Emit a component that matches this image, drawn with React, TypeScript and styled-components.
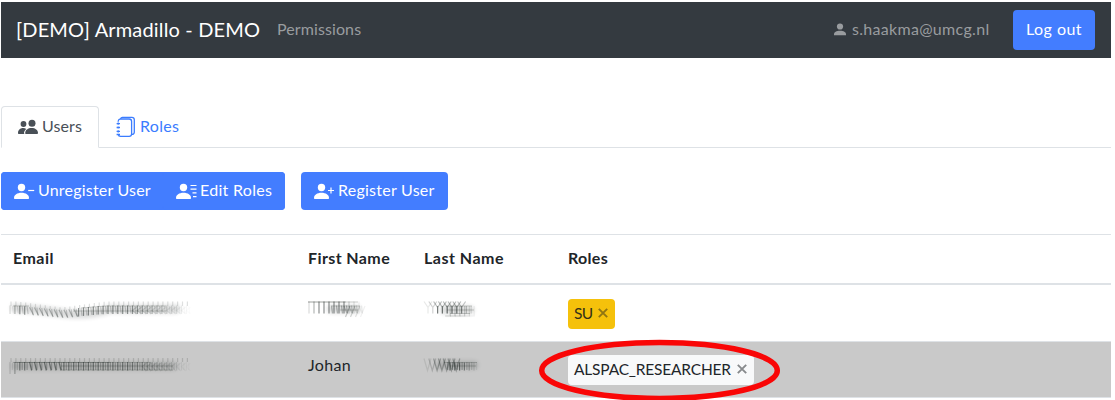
import React from "react";
import styled, { createGlobalStyle } from "styled-components";

const GlobalStyle = createGlobalStyle`
  * { box-sizing: border-box; }
  body {
    margin: 0;
    background: #fff;
    color: #212529;
    font: 400 16px/24px Lato, "Liberation Sans", sans-serif;
    overflow: hidden;
  }
`;

const Page = styled.div`
  width: 1111px;
  height: 400px;
  padding: 2px 0 0 1px;
  overflow: hidden;
`;

const Navbar = styled.nav`
  display: flex;
  align-items: center;
  height: 56px;
  padding: 0 16px 0 15px;
  background: #343a40;
`;

const Label = styled.span<{ $ls?: number; $lift?: number }>`
  margin-bottom: ${(p) => p.$lift ?? 0}px;
  letter-spacing: ${(p) => p.$ls ?? 0}px;
  white-space: nowrap;
`;

const Brand = styled.span`
  width: 261px;
  margin-bottom: 2px;
  font-size: 20px;
  color: #fff;
  white-space: nowrap;
`;

const NavLink = styled.span`
  flex: 1;
  margin-bottom: 2px;
  color: #999c9f;
`;

const Account = styled.span`
  display: flex;
  align-items: center;
  gap: 5px;
  width: 180px;
  color: #999c9f;
`;

const Button = styled.button<{ $w: number; $h?: number }>`
  display: flex;
  align-items: center;
  gap: 3px;
  width: ${(p) => p.$w}px;
  height: ${(p) => p.$h ?? 38}px;
  padding: 0 0 0 13px;
  border: 0;
  border-radius: 4px;
  background: #437dff;
  color: #fff;
  font: inherit;
`;

const Tabs = styled.div`
  display: flex;
  height: 42px;
  margin-top: 48px;
  border-bottom: 1px solid #dee2e6;
`;

const Tab = styled.div<{ $active?: boolean }>`
  display: flex;
  align-items: center;
  gap: 4px;
  height: 42px;
  width: 98px;
  padding-left: 16px;
  border: 1px solid ${(p) => (p.$active ? "#dee2e6" : "transparent")};
  border-bottom-color: ${(p) => (p.$active ? "#fff" : "transparent")};
  border-radius: 4px 4px 0 0;
  color: ${(p) => (p.$active ? "#495057" : "#3b7cff")};
`;

const Toolbar = styled.div`
  display: flex;
  gap: 16px;
  margin: 24px 0;
`;

const ButtonGroup = styled.div`
  display: flex;
  border-radius: 4px;
  background: #437dff;
`;

const Table = styled.div`
  border-top: 1px solid #dee2e6;
`;

const Row = styled.div<{ $shaded?: boolean }>`
  display: grid;
  grid-template-columns: 295px 116px 144px 1fr;
  height: ${(p) => (p.$shaded ? 56 : 57)}px;
  border-bottom: 1px solid #dee2e6;
  background: ${(p) => (p.$shaded ? "#c9c9c9" : "#fff")};
`;

const HeadRow = styled(Row)`
  height: 50px;
  border-bottom-width: 2px;
  font-weight: 700;
`;

const Cell = styled.div`
  padding: 11px 12px;
`;

const Badge = styled.span<{ $w: number; $warning?: boolean }>`
  display: flex;
  align-items: center;
  justify-content: space-between;
  width: ${(p) => p.$w}px;
  height: 30px;
  margin-top: ${(p) => (p.$warning ? 3 : 2)}px;
  padding: 0 7px 2px 6px;
  border-radius: 4px;
  background: ${(p) => (p.$warning ? "#f5c10b" : "#f8f9fa")};
  color: ${(p) => (p.$warning ? "#343019" : "#212529")};
  font-size: 15.5px;
`;

const SmearCanvas = styled.svg`
  display: block;
  margin: 1px 0 0 -12px;
`;

const CloseCanvas = styled.svg`
  flex: none;
`;

const Highlight = styled.svg`
  position: absolute;
  left: 536px;
  top: 336px;
`;

const PersonIcon = () => (
  <svg width="14" height="14" viewBox="0 0 14 14" fill="currentColor">
    <circle cx="7" cy="3.500" r="3.100" />
    <path d="M1 12.200V11.400C1 9 3.400 7.700 7 7.700s6 1.300 6 3.700v.8z" />
  </svg>
);

const PeopleIcon = () => (
  <svg width="20" height="16" viewBox="0 0 20 16" fill="currentColor">
    <circle cx="14" cy="4.200" r="3.500" />
    <path d="M8 15c-.6 0-.8-.4-.8-1 0-3 2.800-5 6.400-5s6.400 2 6.400 5c0 .6-.3 1-.9 1z" />
    <circle cx="5.500" cy="5" r="2.900" />
    <path d="M6.600 15H1c-.7 0-1-.4-1-1 0-2.600 2-4.900 5.200-4.900 1.200 0 2.200.3 3 .8C6.900 11 6 12.500 6 14c0 .4.200.8.600 1z" />
  </svg>
);

const JournalsIcon = () => (
  <svg width="20" height="22" viewBox="0 0 20 22" fill="none" stroke="currentColor" strokeWidth="1.300">
    <path d="M2.200 5.800V5A2.400 2.400 0 0 1 4.600 3H13.200A2.400 2.400 0 0 1 15.600 5.400V18A2.400 2.400 0 0 1 13.200 20.300H4.600A2.400 2.400 0 0 1 2.200 18.300" />
    <path d="M4.500 2.900A2.400 2.400 0 0 1 6.500 1.300H15.900A2.400 2.400 0 0 1 18.300 3.700V16.200A2.400 2.400 0 0 1 15.800 18.400" />
    <path d="M2.200 6.600v2.200M2.200 10.400v2.200M2.200 14.200v2.200M.6 7.700h3.400M.6 11.500h3.400M.6 15.300h3.400M.6 18.500h3.400" />
  </svg>
);

type Mark = "minus" | "plus" | "lines";
const marks: Record<Mark, string> = {
  minus: "M14.200 7.500h6",
  plus: "M14 7.500h6M17 4.500v6",
  lines: "M14.500 2.500h6M14.500 6.200h6M16.500 9.900h4M17 13.600h3.500",
};

const UserIcon = ({ mark }: { mark: Mark }) => (
  <svg width="21" height="18" viewBox="0 -1 21 18" fill="currentColor">
    <circle cx="7.500" cy="4.500" r="3.700" />
    <path d="M1 16c-.6 0-1-.4-1-1 0-3 3.200-5.200 7.500-5.200s7.500 2.200 7.500 5.200c0 .6-.4 1-1 1z" />
    <path d={marks[mark]} fill="none" stroke="currentColor" strokeWidth="1.200" />
  </svg>
);

const CloseIcon = () => (
  <CloseCanvas width="10" height="10" viewBox="0 0 10 10" stroke="currentColor" strokeWidth="1.900" opacity=".52">
    <path d="M.8.800l8.400 8.400M9.200.800l-8.400 8.400" />
  </CloseCanvas>
);

type Stroke = { d: string; o: number };

/* Hidden personal data, drawn as a smear of fine pen strokes over a soft band. */
const Smear = ({ strokes, bars, haze, width }: { strokes: Stroke[]; bars: string[]; haze: string; width: number }) => (
  <SmearCanvas width={width} height="32" viewBox={`0 0 ${width} 32`} fill="none" stroke="#1c2422">
    <path d={haze} opacity=".16" strokeWidth="8" strokeLinecap="round" style={{ filter: "blur(2px)" }} />
    {strokes.map((s, i) => (
      <path key={i} d={s.d} opacity={s.o} strokeWidth="1.200" />
    ))}
    {bars.map((d, i) => (
      <path key={i} d={d} opacity=".22" />
    ))}
  </SmearCanvas>
);

const fade = (i: number, n: number) => Math.min(1, (i + 1) / 3, (n - i) / (n * 0.35));
const line = (x: number, y1: number, y2: number, lean: number) => `M${x} ${y1}L${x + lean} ${y2}`;

const emailOne: Stroke[] = Array.from({ length: 37 }, (_, i) => {
  const x = 9 + i * 4.9;
  const dip = Math.max(0, 4 - Math.abs(x - 60) / 11);
  const f = fade(i, 37);
  const slanted = x > 28 && x < 75;
  return [
    { d: line(x, (slanted ? 9 : 8.5) + dip, 17 + dip, slanted ? 4 : 0), o: (slanted ? 0.3 : 0.48) * f },
    { d: line(x + 2.4, 9 + dip, 16.5 + dip, 1), o: 0.2 * f },
    { d: line(x + 1, 4.5 + dip * 1.5, 9 + dip, 0), o: 0.14 },
    { d: x > 130 ? `M${x + 4} 10L${x} 13.500L${x + 4} 17` : "", o: 0.22 * f },
  ];
}).flat();

const emailTwo: Stroke[] = Array.from({ length: 37 }, (_, i) => {
  const x = 9 + i * 4.9;
  const f = fade(i, 37);
  return [
    { d: line(x, 8, x < 16 ? 20 : 16.5, x > 28 && x < 60 ? 2 : 0), o: 0.5 * f },
    { d: line(x + 2.4, 8.5, 16, 0), o: 0.28 * f },
    { d: line(x + 1, 4, 8, 0), o: 0.16 },
    { d: x > 140 ? `M${x + 4} 9L${x} 12.500L${x + 4} 17` : "", o: 0.22 * f },
  ];
}).flat();

const firstOne: Stroke[] = Array.from({ length: 11 }, (_, i) => {
  const x = 13 + i * 5;
  const f = fade(i, 11);
  return [
    { d: line(x, 4.5, 16.5, 0), o: (i > 7 ? 0.25 : 0.5) * f },
    { d: i > 3 ? line(x + 2.5, 8.5, 16.5, 1) : "", o: 0.3 * f },
    { d: i > 6 ? `M${x} 9l3 7.500M${x + 6} 9l-4.500 11` : "", o: 0.24 * f },
  ];
}).flat();

const lastOne: Stroke[] = Array.from({ length: 10 }, (_, i) => {
  const x = 12 + i * 4.8;
  const f = fade(i, 10);
  return [
    { d: i < 8 ? `M${x} 4.500l4 6v6M${x + 8} 4.500l-4 6` : "", o: 0.3 * f },
    { d: i > 1 ? line(x + 4, 9, 16.5, 0) : "", o: 0.42 * f },
    { d: i > 3 ? `M${x + 7} 9v10h-5` : "", o: 0.22 * f },
  ];
}).flat();

const lastTwo: Stroke[] = Array.from({ length: 11 }, (_, i) => {
  const x = 12 + i * 4.8;
  const f = fade(i, 11);
  return [
    { d: i < 7 ? `M${x} 4.500l3.500 12l3.500 -12` : "", o: 0.3 * f },
    { d: i > 4 ? line(x + 2, 8.5, 16.5, 0) : "", o: 0.6 * f },
    { d: i > 3 ? line(x + 4.5, 8, 16, 0) : "", o: 0.3 * f },
  ];
}).flat();

export default function App() {
  return (
    <Page>
      <GlobalStyle />
      <Navbar>
        <Brand><Label $ls={0.16}>[DEMO] Armadillo - DEMO</Label></Brand>
        <NavLink><Label $ls={0.1}>Permissions</Label></NavLink>
        <Account>
          <PersonIcon />
          <Label $ls={0.3} $lift={2}>s.haakma@umcg.nl</Label>
        </Account>
        <Button $w={82} $h={40}><Label $ls={0.45} $lift={2}>Log out</Label></Button>
      </Navbar>
      <Tabs>
        <Tab $active><PeopleIcon /><Label $ls={0.1} $lift={2}>Users</Label></Tab>
        <Tab><JournalsIcon /><Label $ls={0.3} $lift={2}>Roles</Label></Tab>
      </Tabs>
      <Toolbar>
        <ButtonGroup>
          <Button $w={162}><UserIcon mark="minus" /><Label $ls={0.2} $lift={2}>Unregister User</Label></Button>
          <Button $w={122}><UserIcon mark="lines" /><Label $ls={0.3} $lift={2}>Edit Roles</Label></Button>
        </ButtonGroup>
        <Button $w={147}><UserIcon mark="plus" /><Label $ls={0.25} $lift={2}>Register User</Label></Button>
      </Toolbar>
      <Table>
        <HeadRow>
          <Cell><Label $ls={0.45}>Email</Label></Cell>
          <Cell><Label $ls={0.4}>First Name</Label></Cell>
          <Cell><Label $ls={0.5}>Last Name</Label></Cell>
          <Cell><Label $ls={0.3}>Roles</Label></Cell>
        </HeadRow>
        <Row>
          <Cell><Smear width={200} strokes={emailOne} haze="M14 11Q35 12 60 16T110 12H175" bars={["M12 9H28", "M80 11L105 9H165", "M72 14H165"]} /></Cell>
          <Cell><Smear width={80} strokes={firstOne} haze="M35 12H60" bars={["M12 5H62", "M12 5H50", "M36 9H64", "M44 13H62"]} /></Cell>
          <Cell><Smear width={80} strokes={lastOne} haze="M32 13H58" bars={["M34 9H60", "M35 13H62", "M38 16.500H58"]} /></Cell>
          <Cell><Badge $w={47} $warning><Label $ls={-0.6}>SU</Label><CloseIcon /></Badge></Cell>
        </Row>
        <Row $shaded>
          <Cell><Smear width={200} strokes={emailTwo} haze="M14 12H172" bars={["M12 8.500H150", "M14 8.500H110", "M60 12H172", "M60 16H172"]} /></Cell>
          <Cell><Label $ls={0.35}>Johan</Label></Cell>
          <Cell><Smear width={80} strokes={lastTwo} haze="M28 11H62" bars={["M32 8.500H65", "M38 12H64"]} /></Cell>
          <Cell><Badge $w={186}><Label $ls={-0.19}>ALSPAC_RESEARCHER</Label><CloseIcon /></Badge></Cell>
        </Row>
      </Table>
      <Highlight width="248" height="64" viewBox="0 0 248 64" fill="none" stroke="#f90606" strokeWidth="5.500">
        <ellipse cx="123.500" cy="34.500" rx="117.800" ry="28" />
      </Highlight>
    </Page>
  );
}
